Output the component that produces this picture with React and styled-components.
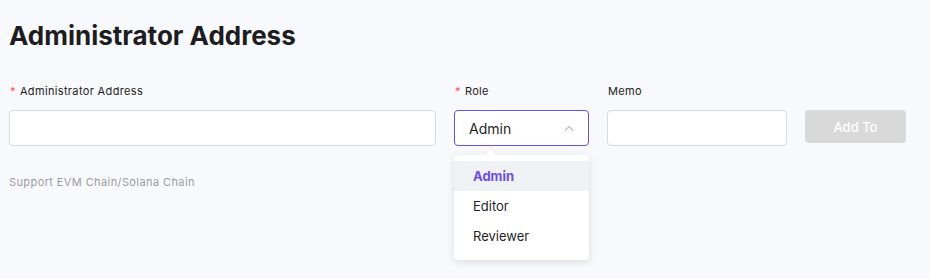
import React from 'react';
import styled, { createGlobalStyle } from 'styled-components';

const GlobalStyle = createGlobalStyle`
  html, body {
    margin: 0;
    padding: 0;
    background: #f8f9fc;
    font-family: Inter, "Noto Sans", sans-serif;
    color: #1f1f1f;
  }
`;

const Page = styled.div`
  padding: 20px 9px 0;
  height: 279px;
  box-sizing: border-box;
`;

const Title = styled.h1`
  margin: 0;
  font-size: 26px;
  font-weight: 700;
  line-height: 32px;
  color: #1d1d1f;
`;

const FormRow = styled.div`
  display: flex;
  align-items: flex-start;
  gap: 18px;
  margin-top: 32px;
`;

const Field = styled.div`
  display: flex;
  flex-direction: column;
  width: ${p => p.$width}px;
  position: relative;
`;

const Label = styled.div`
  font-size: 11px;
  line-height: 14px;
  letter-spacing: 0.35px;
  color: #222;
  height: 14px;
  margin-bottom: 12px;
  padding-left: 1px;
`;

const Star = styled.span`
  color: #ff4d4f;
  margin-right: 4px;
`;

const Input = styled.div`
  height: 36px;
  box-sizing: border-box;
  border: 1px solid ${p => (p.$active ? '#6a4fe0' : '#d9d9e0')};
  border-radius: 4px;
  background: #fff;
  display: flex;
  align-items: center;
  justify-content: space-between;
  padding: 0 14px;
  font-size: 14px;
  color: #1f1f1f;
`;

const Help = styled.div`
  margin-top: 29px;
  font-size: 11px;
  letter-spacing: 0.4px;
  color: #9b9ba3;
`;

const Button = styled.button`
  margin-top: 26px;
  width: 101px;
  height: 33px;
  border: none;
  border-radius: 4px;
  background: #d9d9d9;
  color: #fff;
  font-family: inherit;
  font-size: 13px;
  font-weight: 500;
`;

const Menu = styled.div`
  position: absolute;
  top: 71px;
  left: 0;
  width: 135px;
  background: #fff;
  border-radius: 4px;
  box-shadow: 0 2px 8px rgba(20, 20, 40, 0.12);
  padding: 6px 0 9px;
  &::before {
    content: '';
    position: absolute;
    top: -4px;
    left: 33px;
    width: 8px;
    height: 8px;
    background: #fff;
    transform: rotate(45deg);
    box-shadow: -1px -1px 2px rgba(20, 20, 40, 0.06);
  }
`;

const Option = styled.div`
  position: relative;
  height: 30px;
  display: flex;
  align-items: center;
  padding: 0 19px;
  font-size: 13px;
  font-weight: ${p => (p.$selected ? 700 : 400)};
  color: ${p => (p.$selected ? '#6b4ee6' : '#1f1f1f')};
  background: ${p => (p.$selected ? '#f0f1f5' : 'transparent')};
`;

const Chevron = () => (
  <svg width="10" height="6" viewBox="0 0 10 6" fill="none">
    <path d="M1 5.5L5 1.5L9 5.5" stroke="#8a8a95" strokeWidth="1" />
  </svg>
);

export default function App() {
  return (
    <>
      <GlobalStyle />
      <Page>
        <Title>Administrator Address</Title>
        <FormRow>
          <Field $width={427}>
            <Label><Star>*</Star>Administrator Address</Label>
            <Input />
            <Help>Support EVM Chain/Solana Chain</Help>
          </Field>
          <Field $width={135}>
            <Label><Star>*</Star>Role</Label>
            <Input $active>
              Admin
              <Chevron />
            </Input>
            <Menu>
              <Option $selected>Admin</Option>
              <Option>Editor</Option>
              <Option>Reviewer</Option>
            </Menu>
          </Field>
          <Field $width={180}>
            <Label>Memo</Label>
            <Input />
          </Field>
          <Button>Add To</Button>
        </FormRow>
      </Page>
    </>
  );
}
